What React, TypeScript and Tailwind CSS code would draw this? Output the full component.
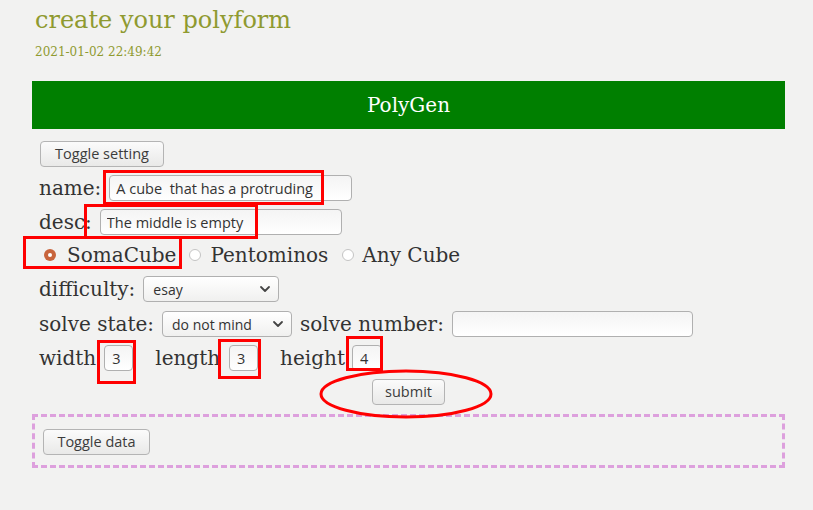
import React from 'react'

const serif = { fontFamily: '"DejaVu Serif", "Liberation Serif", serif' }
const sans = { fontFamily: '"Open Sans", "DejaVu Sans", sans-serif' }

function Btn({ children, className = '' }: { children: React.ReactNode; className?: string }) {
  return (
    <button
      style={sans}
      className={`h-[26px] rounded-[4px] border border-[#b4b4b4] bg-gradient-to-b from-[#fbfbfb] to-[#e9e9e8] px-3 text-[14.5px] text-[#3c3c3c] ${className}`}
    >
      {children}
    </button>
  )
}

function Field({ value, className = '' }: { value: string; className?: string }) {
  return (
    <input
      readOnly
      value={value}
      style={sans}
      className={`h-[26px] rounded-[4px] border border-[#b0b0b0] bg-gradient-to-b from-[#f4f4f4] to-white px-[6px] text-[14.5px] text-[#333] outline-none ${className}`}
    />
  )
}

function Select({ value, className = '' }: { value: string; className?: string }) {
  return (
    <div
      style={sans}
      className={`flex h-[26px] items-center justify-between rounded-[4px] border border-[#b0b0b0] bg-gradient-to-b from-white to-[#f0f0ef] pl-[9px] pr-[7px] text-[14px] text-[#333] ${className}`}
    >
      <span>{value}</span>
      <svg width="12" height="8" viewBox="0 0 12 8" fill="none">
        <path d="M2 2l4 4 4-4" stroke="#444" strokeWidth="1.8" strokeLinecap="round" strokeLinejoin="round" />
      </svg>
    </div>
  )
}

function Radio({ checked, className = '' }: { checked?: boolean; className?: string }) {
  return checked ? (
    <span className={`flex h-[12px] w-[12px] shrink-0 items-center justify-center rounded-full bg-[#c8643c] ${className}`}>
      <span className="h-[4px] w-[4px] rounded-full bg-white" />
    </span>
  ) : (
    <span className={`block h-[12px] w-[12px] shrink-0 rounded-full border border-[#c4c4c4] bg-white ${className}`} />
  )
}

export default function App() {
  return (
    <div className="relative min-h-[510px] w-full bg-[#f2f2f1] text-[#333]" style={serif}>
      <div className="px-[35px] pt-[5px]">
        <h1 className="text-[24px] leading-[30px] text-[#8f9a30]">create your polyform</h1>
        <div className="mt-[9px] text-[12px] leading-[16px] text-[#8f9a30]">2021-01-02 22:49:42</div>
      </div>

      <div className="ml-[32px] mr-[28px] mt-[21px]">
        <div className="flex h-[48px] items-center justify-center bg-[#007f00] text-[20px] text-white">PolyGen</div>

        <div className="px-[7px] text-[20px]">
          <Btn className="ml-[1px] mt-[12px] w-[124px]">Toggle setting</Btn>

          <div className="mt-[4px] flex h-[34px] items-center gap-[8px]">
            <span>name:</span>
            <Field value="A cube  that has a protruding" className="w-[243px]" />
          </div>

          <div className="flex h-[34px] items-center gap-[8px]">
            <span>desc:</span>
            <Field value="The middle is empty" className="w-[242px]" />
          </div>

          <div className="flex h-[32px] items-center pl-[5px]">
            <Radio checked />
            <span className="ml-[11px]">SomaCube</span>
            <Radio className="ml-[13px]" />
            <span className="ml-[9px]">Pentominos</span>
            <Radio className="ml-[14px]" />
            <span className="ml-[8px]">Any Cube</span>
          </div>

          <div className="flex h-[36px] items-center gap-[8px]">
            <span>difficulty:</span>
            <Select value="esay" className="w-[136px]" />
          </div>

          <div className="flex h-[34px] items-center gap-[8px]">
            <span>solve state:</span>
            <Select value="do not mind" className="w-[130px]" />
            <span>solve number:</span>
            <Field value="" className="w-[241px]" />
          </div>

          <div className="flex h-[34px] items-center">
            <span>width</span>
            <Field value="3" className="ml-[8px] w-[29px] px-[7px] text-[13px]" />
            <span className="ml-[22px]">length</span>
            <Field value="3" className="ml-[9px] w-[29px] px-[7px] text-[13px]" />
            <span className="ml-[22px]">height</span>
            <Field value="4" className="ml-[7px] w-[30px] px-[7px] text-[13px]" />
          </div>

          <div className="mt-[4px] flex justify-center">
            <Btn className="w-[73px]">submit</Btn>
          </div>
        </div>

        <div className="mt-[9px] h-[54px] border-[3px] border-dashed border-[#dda0dd] px-[8px] pt-[12px]">
          <Btn className="w-[107px]">Toggle data</Btn>
        </div>
      </div>

      {/* annotation marks */}
      <div className="pointer-events-none absolute left-[103px] top-[170px] h-[35px] w-[221px] border-[3px] border-[#ff0000]" />
      <div className="pointer-events-none absolute left-[84px] top-[204px] h-[35px] w-[174px] border-[3px] border-[#ff0000]" />
      <div className="pointer-events-none absolute left-[23px] top-[236px] h-[33px] w-[159px] border-[3px] border-[#ff0000]" />
      <div className="pointer-events-none absolute left-[97px] top-[340px] h-[44px] w-[39px] border-[3px] border-[#ff0000]" />
      <div className="pointer-events-none absolute left-[218px] top-[339px] h-[40px] w-[43px] border-[3px] border-[#ff0000]" />
      <div className="pointer-events-none absolute left-[346px] top-[336px] h-[35px] w-[37px] border-[3px] border-[#ff0000]" />
      <svg className="pointer-events-none absolute left-[318px] top-[368px]" width="176" height="52" viewBox="0 0 176 52">
        <ellipse cx="88" cy="26" rx="85" ry="23" fill="none" stroke="#ff0000" strokeWidth="3" />
      </svg>
    </div>
  )
}
